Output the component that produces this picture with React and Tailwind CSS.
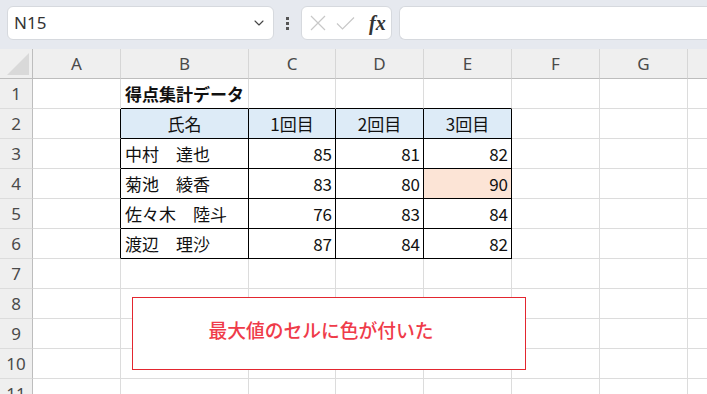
import React from 'react';
import { ChevronDown } from 'lucide-react';

const COLS = ['A', 'B', 'C', 'D', 'E', 'F', 'G', 'H'];

// score rows shown in B3:E6
const scores = [
  { name: '中村　達也', c: 85, d: 81, e: 82 },
  { name: '菊池　綾香', c: 83, d: 80, e: 90 },
  { name: '佐々木　陸斗', c: 76, d: 83, e: 84 },
  { name: '渡辺　理沙', c: 87, d: 84, e: 82 },
];

const cellFont = { fontFamily: '"Noto Sans CJK JP", "Liberation Sans", sans-serif' };
const uiFont = { fontFamily: '"Noto Sans", "Liberation Sans", sans-serif' };

const FormulaBar = () => (
  <div className="h-[49px] bg-[#e6e9ef] flex items-start pt-[6px] pl-[7px] gap-[7px]">
    <div className="w-[267px] h-[34px] bg-white rounded-[6px] border border-[#d6d9de] flex items-center justify-between pl-[6px] pr-[6px]">
      <span className="text-[17px] text-[#333]" style={uiFont}>N15</span>
      <ChevronDown size={16} strokeWidth={1.6} className="text-[#444]" />
    </div>
    <div className="h-[34px] w-[13px] flex flex-col items-center justify-center gap-[2px]">
      <span className="w-[3px] h-[3px] bg-[#555]" />
      <span className="w-[3px] h-[3px] bg-[#555]" />
      <span className="w-[3px] h-[3px] bg-[#555]" />
    </div>
    <div className="w-[91px] h-[34px] bg-white rounded-[6px] border border-[#d6d9de] flex items-center pl-[8px]">
      <svg width="16" height="16" viewBox="0 0 16 16" className="text-[#c8c8c8]">
        <path d="M1 1 15 15M15 1 1 15" stroke="currentColor" strokeWidth="1.2" fill="none" />
      </svg>
      <svg width="19" height="14" viewBox="0 0 19 14" className="ml-[10px] text-[#c8c8c8]">
        <path d="M1 7.5 6.5 13 18 1.5" stroke="currentColor" strokeWidth="1.2" fill="none" />
      </svg>
      <span className="ml-[14px] text-[20px] italic font-semibold text-[#333] leading-none" style={{ fontFamily: '"Liberation Serif", serif' }}>fx</span>
    </div>
    <div className="flex-1 h-[34px] bg-white rounded-l-[6px] border border-r-0 border-[#d6d9de]" />
  </div>
);

const Cell = ({ className = '', children }) => (
  <div className={`h-[30px] border-r border-b flex items-center text-[17px] text-[#111] whitespace-nowrap ${className}`} style={cellFont}>
    {children}
  </div>
);

const RowHead = ({ n }) => (
  <div className="h-[30px] border-r border-b border-r-[#bdbdbd] border-b-[#dcdcdc] bg-[#efefef] flex items-center justify-center text-[17px] text-[#4a4a4a]" style={uiFont}>
    {n}
  </div>
);

const rowCells = (r) => {
  const grid = 'border-[#dcdcdc]';
  const table = 'border-black';
  const rest = [
    <Cell key="F" className={grid} />,
    <Cell key="G" className={grid} />,
    <Cell key="H" className={grid} />,
  ];
  if (r === 1) {
    return [
      <Cell key="A" className={grid} />,
      <Cell key="B" className={`${grid} border-b-black font-bold pl-[4px] text-[17.3px]`}>得点集計データ</Cell>,
      <Cell key="C" className={`${grid} border-b-black`} />,
      <Cell key="D" className={`${grid} border-b-black`} />,
      <Cell key="E" className={`${grid} border-b-black`} />,
      ...rest,
    ];
  }
  if (r === 2) {
    return [
      <Cell key="A" className={`${grid} border-r-black`} />,
      <Cell key="B" className={`${table} bg-[#ddebf7] justify-center`}>氏名</Cell>,
      <Cell key="C" className={`${table} bg-[#ddebf7] justify-center`}>1回目</Cell>,
      <Cell key="D" className={`${table} bg-[#ddebf7] justify-center`}>2回目</Cell>,
      <Cell key="E" className={`${table} bg-[#ddebf7] justify-center`}>3回目</Cell>,
      ...rest,
    ];
  }
  if (r >= 3 && r <= 6) {
    const s = scores[r - 3];
    const max = Math.max(...scores.map((x) => x.e));
    return [
      <Cell key="A" className={`${grid} border-r-black`} />,
      <Cell key="B" className={`${table} pl-[4px]`}>{s.name}</Cell>,
      <Cell key="C" className={`${table} justify-end pr-[3px]`}>{s.c}</Cell>,
      <Cell key="D" className={`${table} justify-end pr-[3px]`}>{s.d}</Cell>,
      <Cell key="E" className={`${table} justify-end pr-[3px] ${s.e === max ? 'bg-[#fce4d6]' : ''}`}>{s.e}</Cell>,
      ...rest,
    ];
  }
  return COLS.map((c) => <Cell key={c} className={grid} />);
};

const Sheet = () => (
  <div className="grid grid-cols-[33px_88px_128px_87px_88px_88px_88px_88px_88px] relative">
    {/* select-all corner */}
    <div className="h-[30px] bg-[#efefef] border-r border-b border-r-[#bdbdbd] border-b-[#bdbdbd] flex items-end justify-end pr-[3px] pb-[3px]">
      <svg width="22" height="22" viewBox="0 0 22 22">
        <path d="M22 0V22H0Z" fill="#d9d9d9" />
      </svg>
    </div>
    {COLS.map((c) => (
      <div
        key={c}
        className="h-[30px] bg-[#efefef] border-r border-b border-r-[#d6d6d6] border-b-[#bdbdbd] flex items-center justify-center text-[17px] text-[#4a4a4a]"
        style={uiFont}
      >
        {c}
      </div>
    ))}

    {Array.from({ length: 11 }, (_, i) => i + 1).map((r) => (
      <React.Fragment key={r}>
        <RowHead n={r} />
        {rowCells(r)}
      </React.Fragment>
    ))}

    {/* text box shape floating over the sheet */}
    <div className="absolute left-[132px] top-[248px] w-[394px] h-[73px] bg-white border border-[#e3262f] flex items-center justify-center pr-[16px] pb-[6px]">
      <span className="text-[18.75px] font-medium text-[#ef3b4a]" style={cellFont}>最大値のセルに色が付いた</span>
    </div>
  </div>
);

export default function App() {
  return (
    <div className="w-[707px] h-[394px] overflow-hidden bg-white">
      <FormulaBar />
      <Sheet />
    </div>
  );
}
